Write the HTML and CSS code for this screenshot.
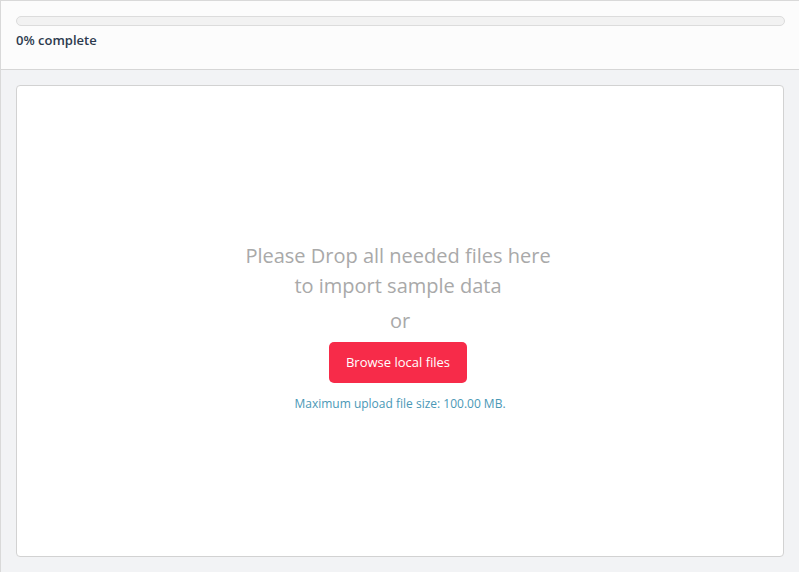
FILE: index.html
```html
<!DOCTYPE html>
<html>
<head>
<meta charset="utf-8">
<link rel="stylesheet" href="styles.css">
</head>
<body>
<div class="frame">
  <div class="progress-panel">
    <div class="progress-track"><div class="progress-fill" style="width:0%"></div></div>
    <div class="progress-label">0% complete</div>
  </div>
  <div class="main">
    <div class="dropzone">
      <div class="drop-title">Please Drop all needed files here<br>to import sample data</div>
      <div class="drop-or">or</div>
      <button class="browse-btn">Browse local files</button>
      <div class="drop-note">Maximum upload file size: 100.00 MB.</div>
    </div>
  </div>
</div>
</body>
</html>
```
FILE: styles.css
```css
html, body {
  margin: 0;
  padding: 0;
  height: 100%;
}
body {
  font-family: "Open Sans", "Liberation Sans", sans-serif;
  background: #f2f3f5;
}
.frame {
  box-sizing: border-box;
  height: 572px;
  border-top: 1px solid #d9d9d9;
  border-left: 1px solid #d9d9d9;
  display: flex;
  flex-direction: column;
}
.progress-panel {
  box-sizing: border-box;
  height: 69px;
  background: #fcfcfc;
  border-bottom: 1px solid #d6d6d6;
  padding: 15px 14px 0 15px;
}
.progress-track {
  box-sizing: border-box;
  height: 10px;
  border: 1px solid #dcdcdc;
  border-radius: 5px;
  background: #f2f2f2;
  overflow: hidden;
}
.progress-fill {
  height: 100%;
  background: #3a9ad9;
}
.progress-label {
  margin-top: 6px;
  font-size: 13px;
  line-height: 17px;
  font-weight: 600;
  color: #2c3a4e;
}
.main {
  flex: 1;
  padding: 15px 15px 15px 15px;
  display: flex;
}
.dropzone {
  flex: 1;
  box-sizing: border-box;
  background: #fff;
  border: 1px solid #d2d2d2;
  border-radius: 4px;
  display: flex;
  flex-direction: column;
  align-items: center;
  justify-content: center;
  padding-top: 10px;
}
.drop-title {
  font-size: 20px;
  line-height: 30px;
  color: #a9a9a9;
  text-align: center;
  margin-right: 4px;
}
.drop-or {
  margin-top: 5px;
  font-size: 20px;
  line-height: 30px;
  color: #a9a9a9;
}
.browse-btn {
  margin-top: 6px;
  margin-right: 4px;
  height: 41px;
  padding: 0 17px;
  border: none;
  border-radius: 5px;
  background: #f72b49;
  color: #fff;
  font-family: "Open Sans", "Liberation Sans", sans-serif;
  font-size: 13px;
  cursor: pointer;
}
.drop-note {
  margin-top: 13px;
  font-size: 12px;
  line-height: 16px;
  color: #4a98b6;
}
```
